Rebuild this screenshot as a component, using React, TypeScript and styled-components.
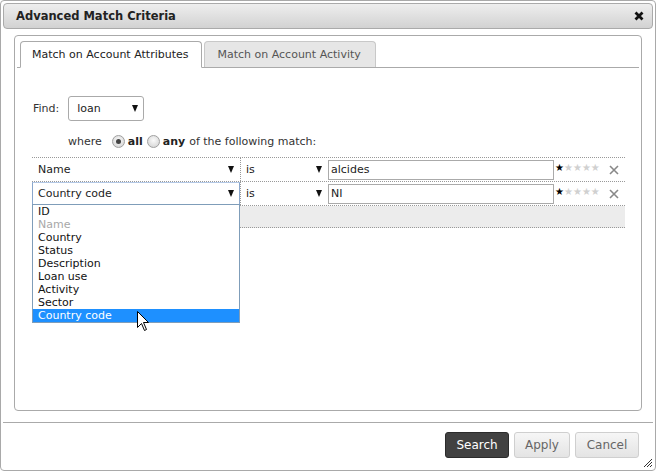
import React from 'react';
import styled, { createGlobalStyle } from 'styled-components';

const Global = createGlobalStyle`
  html, body { margin: 0; padding: 0; background: #fff; }
  body { font-family: "DejaVu Sans", Verdana, sans-serif; font-size: 11px; color: #222; }
  * { box-sizing: border-box; }
`;

const Dialog = styled.div`
  position: relative;
  width: 656px;
  height: 471px;
  border: 1px solid #a9a9a9;
  border-radius: 4px;
  padding: 2px;
  display: flex;
  flex-direction: column;
  background: #fff;
`;

const TitleBar = styled.div`
  height: 26px;
  flex: none;
  border: 1px solid #aaa;
  border-radius: 4px;
  background: linear-gradient(#eeeeee, #d2d2d2);
  display: flex;
  align-items: center;
  justify-content: space-between;
  padding: 0 8px 0 12px;
`;

const Title = styled.span`
  font-weight: bold;
  font-size: 11.5px;
  color: #222;
`;

const Body = styled.div`
  flex: 1;
  display: flex;
  flex-direction: column;
  padding: 6px 11px 11px;
`;

const Panel = styled.div`
  flex: 1;
  border: 1px solid #aaa;
  border-radius: 4px;
  padding: 5px 2px 0;
`;

const TabNav = styled.div`
  display: flex;
  gap: 2px;
  padding-left: 3px;
  border-bottom: 1px solid #aaa;
`;

const Tab = styled.div<{ $active?: boolean }>`
  height: ${p => (p.$active ? 27 : 26)}px;
  margin-bottom: ${p => (p.$active ? -1 : 0)}px;
  padding: ${p => (p.$active ? '0 13px 0 11px' : '0 14px 0 12px')};
  display: flex;
  align-items: center;
  border: 1px solid ${p => (p.$active ? '#aaa' : '#c8c8c8')};
  border-bottom: ${p => (p.$active ? '1px solid #fff' : 'none')};
  border-radius: 4px 4px 0 0;
  background: ${p => (p.$active ? '#fff' : '#e6e6e6')};
  color: ${p => (p.$active ? '#222' : '#555')};
  font-size: 11px;
`;

const Content = styled.div`
  padding: 28px 14px 0 15px;
`;

const FindRow = styled.div`
  display: flex;
  align-items: center;
  padding-left: 1px;
  gap: 9px;
`;

const Label = styled.span`
  color: #333;
`;

const FindSelect = styled.div`
  width: 76px;
  height: 25px;
  border: 1px solid #aaa;
  border-radius: 3px;
  display: flex;
  align-items: center;
  justify-content: space-between;
  padding: 0 5px 0 8px;
`;

const Arrow = styled.span`
  width: 0;
  height: 0;
  border-left: 3.5px solid transparent;
  border-right: 3.5px solid transparent;
  border-top: 7px solid #111;
`;

const WhereRow = styled.div`
  display: flex;
  align-items: center;
  height: 17px;
  margin-top: 12px;
  padding-left: 36px;
  color: #333;
`;

const Radio = styled.span<{ $checked?: boolean }>`
  width: 13px;
  height: 13px;
  border-radius: 50%;
  border: 1px solid #a0a0a0;
  background: radial-gradient(circle at 50% 40%, #fafafa, #cfcfcf);
  display: inline-flex;
  align-items: center;
  justify-content: center;
  margin: 0 3px 0 ${p => (p.$checked ? 10 : 5)}px;
  &::after {
    content: '';
    width: 5px;
    height: 5px;
    border-radius: 50%;
    background: ${p => (p.$checked ? '#444' : 'transparent')};
  }
`;

const Bold = styled.b`
  font-weight: bold;
  color: #222;
  margin-right: 4px;
`;

const Table = styled.div`
  margin-top: 7px;
  border-top: 1px dotted #999;
`;

const Row = styled.div<{ $blank?: boolean }>`
  display: flex;
  align-items: center;
  height: ${p => (p.$blank ? 22 : 24)}px;
  border-bottom: 1px dotted #999;
  background: ${p => (p.$blank ? '#ececec' : 'transparent')};
`;

const FieldSelect = styled.div<{ $focus?: boolean }>`
  position: relative;
  width: 208px;
  height: 100%;
  flex: none;
  border: 1px solid ${p => (p.$focus ? '#8aa7cc' : 'transparent')};
  border-top-color: ${p => (p.$focus ? '#b3c8e6' : 'transparent')};
  display: flex;
  align-items: center;
  justify-content: space-between;
  padding: 0 5px 0 5px;
`;

const OpSelect = styled.div`
  width: 88px;
  height: 100%;
  flex: none;
  border-left: 1px dotted #999;
  display: flex;
  align-items: center;
  justify-content: space-between;
  padding: 0 6px 0 5px;
`;

const ValueInput = styled.div`
  width: 226px;
  height: 20px;
  flex: none;
  border: 1px solid #aaa;
  padding-left: 2px;
  display: flex;
  align-items: center;
`;

const Stars = styled.span`
  margin-left: 1px;
  font-size: 10px;
  color: #d0d0d0;
  line-height: 1;
  margin-top: -4px;
`;

const StarOn = styled.span`
  color: #000;
`;

const RemoveIcon = styled.svg`
  margin-left: 9px;
  width: 10px;
  height: 10px;
`;

const DropList = styled.div`
  position: absolute;
  left: -1px;
  top: 100%;
  width: 208px;
  border: 1px solid #7f9db9;
  background: #fff;
  z-index: 5;
`;

const Option = styled.div<{ $selected?: boolean; $disabled?: boolean }>`
  height: 13px;
  line-height: 13px;
  padding-left: 5px;
  background: ${p => (p.$selected ? '#1e90ff' : 'transparent')};
  color: ${p => (p.$selected ? '#fff' : p.$disabled ? '#a8a8a8' : '#111')};
`;

const Footer = styled.div`
  flex: none;
  border-top: 1px solid #aaa;
  display: flex;
  justify-content: flex-end;
  gap: 5px;
  padding: 9px 14px 10px 0;
`;

const Button = styled.button<{ $primary?: boolean; $w: number }>`
  width: ${p => p.$w}px;
  height: 26px;
  border-radius: 3px;
  font-family: "DejaVu Sans", Verdana, sans-serif;
  font-size: 12px;
  padding: 0;
  border: 1px solid ${p => (p.$primary ? '#2b2b2b' : '#cfcfcf')};
  background: ${p => (p.$primary ? '#414141' : 'linear-gradient(#f6f6f6, #e4e4e4)')};
  color: ${p => (p.$primary ? '#fff' : '#666')};
`;

const Grip = styled.svg`
  position: absolute;
  right: 2px;
  bottom: 2px;
  width: 12px;
  height: 12px;
`;

const Cursor = styled.svg`
  position: absolute;
  left: 136px;
  top: 310px;
  width: 13px;
  height: 21px;
  z-index: 10;
`;

const options = ['ID', 'Name', 'Country', 'Status', 'Description', 'Loan use', 'Activity', 'Sector', 'Country code'];

const XIcon = () => (
  <RemoveIcon viewBox="0 0 10 10">
    <path d="M1 1 L9 9 M9 1 L1 9" stroke="#888" strokeWidth="1.6" />
  </RemoveIcon>
);

const Rating = () => (
  <Stars>
    <StarOn>★</StarOn>★★★★
  </Stars>
);

export default function App() {
  return (
    <>
      <Global />
      <Dialog>
        <TitleBar>
          <Title>Advanced Match Criteria</Title>
          <svg width="10" height="10" viewBox="0 0 10 10">
            <path d="M1.5 1.5 L8.5 8.5 M8.5 1.5 L1.5 8.5" stroke="#111" strokeWidth="2.8" />
          </svg>
        </TitleBar>
        <Body>
          <Panel>
            <TabNav>
              <Tab $active>Match on Account Attributes</Tab>
              <Tab>Match on Account Activity</Tab>
            </TabNav>
            <Content>
              <FindRow>
                <Label>Find:</Label>
                <FindSelect>
                  <span>loan</span>
                  <Arrow />
                </FindSelect>
              </FindRow>
              <WhereRow>
                where
                <Radio $checked />
                <Bold>all</Bold>
                <Radio style={{ marginLeft: 0 }} />
                <Bold>any</Bold>
                of the following match:
              </WhereRow>
              <Table>
                <Row>
                  <FieldSelect>
                    <span>Name</span>
                    <Arrow />
                  </FieldSelect>
                  <OpSelect>
                    <span>is</span>
                    <Arrow />
                  </OpSelect>
                  <ValueInput>alcides</ValueInput>
                  <Rating />
                  <XIcon />
                </Row>
                <Row>
                  <FieldSelect $focus>
                    <span>Country code</span>
                    <Arrow />
                    <DropList>
                      {options.map((o, i) => (
                        <Option key={o} $disabled={o === 'Name'} $selected={i === options.length - 1}>
                          {o}
                        </Option>
                      ))}
                    </DropList>
                  </FieldSelect>
                  <OpSelect>
                    <span>is</span>
                    <Arrow />
                  </OpSelect>
                  <ValueInput>NI</ValueInput>
                  <Rating />
                  <XIcon />
                </Row>
                <Row $blank />
              </Table>
            </Content>
          </Panel>
        </Body>
        <Footer>
          <Button $primary $w={64}>Search</Button>
          <Button $w={56}>Apply</Button>
          <Button $w={64}>Cancel</Button>
        </Footer>
        <Grip viewBox="0 0 12 12">
          <path d="M11 3 L3 11 M11 6 L6 11 M11 9 L9 11" stroke="#333" strokeWidth="1" />
        </Grip>
        <Cursor viewBox="0 0 13 21">
          <path d="M0.5 0.5 L0.5 16.5 L4.5 12.5 L7.5 19.5 L9.5 18.5 L6.5 11.5 L11.5 11.5 Z" fill="#fff" stroke="#000" strokeWidth="1" />
        </Cursor>
      </Dialog>
    </>
  );
}
